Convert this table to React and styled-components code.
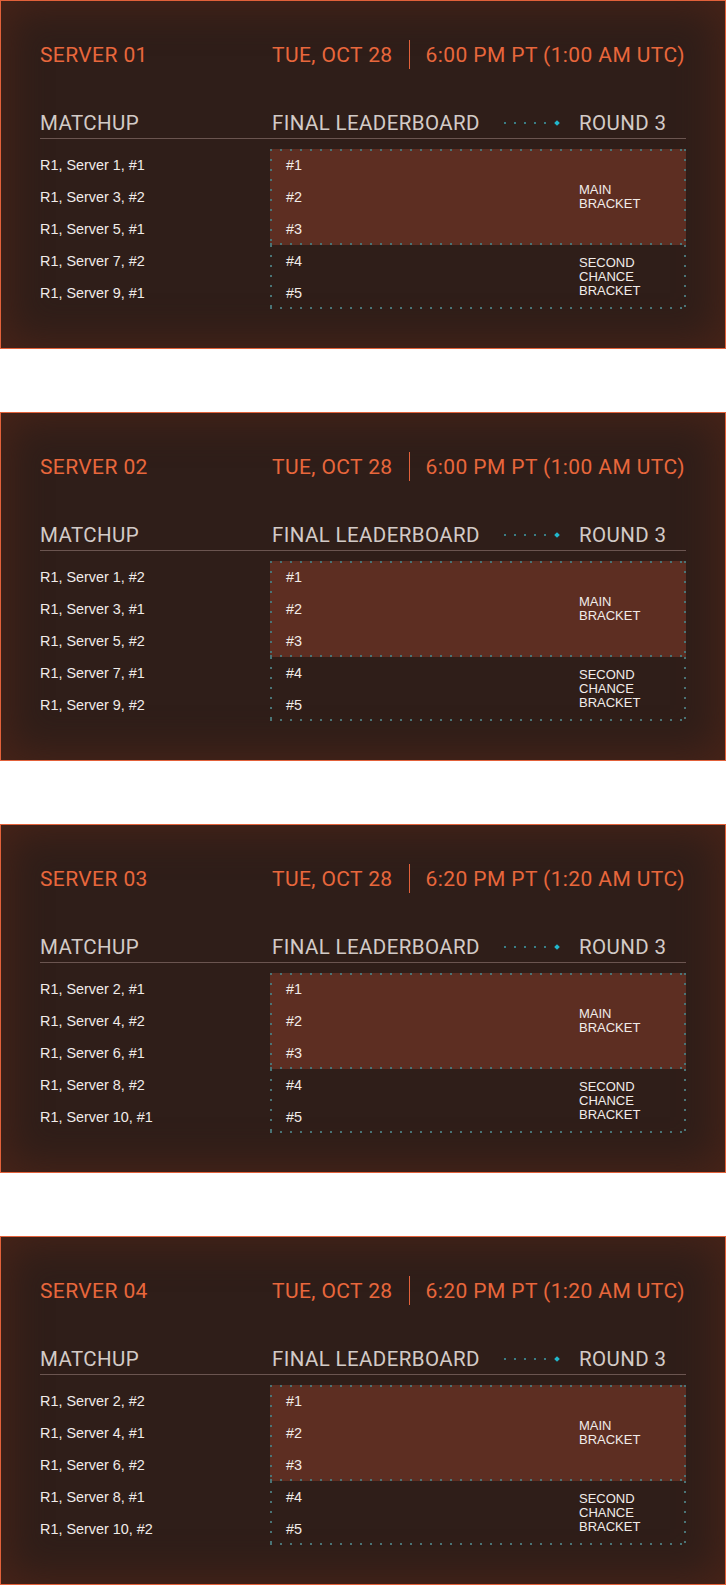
import React from 'react';
import styled, { createGlobalStyle } from 'styled-components';

const DOT = '#4a7476';

const dotted = (edges) => {
    const layers = [];
    const h = `linear-gradient(to right, ${DOT} 2px, transparent 2px)`;
    const v = `linear-gradient(to bottom, ${DOT} 2px, transparent 2px)`;
    if (edges.includes('t')) layers.push([h, 'left top / 10px 2px repeat-x']);
    if (edges.includes('b')) layers.push([h, 'left bottom / 10px 2px repeat-x']);
    if (edges.includes('l')) layers.push([v, 'left top / 2px 10px repeat-y']);
    if (edges.includes('r')) layers.push([v, 'right top / 2px 10px repeat-y']);
    return layers.map(([img, pos]) => `${img} ${pos}`).join(', ');
};

const servers = [
    {
        name: 'SERVER 01',
        time: '6:00 PM PT (1:00 AM UTC)',
        matchups: ['R1, Server 1, #1', 'R1, Server 3, #2', 'R1, Server 5, #1', 'R1, Server 7, #2', 'R1, Server 9, #1'],
    },
    {
        name: 'SERVER 02',
        time: '6:00 PM PT (1:00 AM UTC)',
        matchups: ['R1, Server 1, #2', 'R1, Server 3, #1', 'R1, Server 5, #2', 'R1, Server 7, #1', 'R1, Server 9, #2'],
    },
    {
        name: 'SERVER 03',
        time: '6:20 PM PT (1:20 AM UTC)',
        matchups: ['R1, Server 2, #1', 'R1, Server 4, #2', 'R1, Server 6, #1', 'R1, Server 8, #2', 'R1, Server 10, #1'],
    },
    {
        name: 'SERVER 04',
        time: '6:20 PM PT (1:20 AM UTC)',
        matchups: ['R1, Server 2, #2', 'R1, Server 4, #1', 'R1, Server 6, #2', 'R1, Server 8, #1', 'R1, Server 10, #2'],
    },
];

const GlobalStyle = createGlobalStyle`
    body {
        margin: 0;
        background: #ffffff;
        font-family: "Liberation Sans", Arial, sans-serif;
    }
`;

const ServerCard = ({ server }) => (
    <Card>
        <Header>
            <ServerName>{server.name}</ServerName>
            <Schedule>
                <span>TUE, OCT 28</span>
                <Divider />
                <span>{server.time}</span>
            </Schedule>
        </Header>
        <ColumnHeads>
            <HeadLabel>MATCHUP</HeadLabel>
            <HeadLabel $indent>
                FINAL LEADERBOARD
                <Connector>
                    <DotTrail />
                    <Diamond />
                </Connector>
            </HeadLabel>
            <HeadLabel>ROUND 3</HeadLabel>
        </ColumnHeads>
        <Body>
            <MatchList>
                {server.matchups.map((m) => (
                    <Row key={m}>{m}</Row>
                ))}
            </MatchList>
            <Board>
                <Bracket $main>
                    <Places>
                        <Row>#1</Row>
                        <Row>#2</Row>
                        <Row>#3</Row>
                    </Places>
                    <BracketLabel>MAIN<br />BRACKET</BracketLabel>
                </Bracket>
                <Bracket>
                    <Places>
                        <Row>#4</Row>
                        <Row>#5</Row>
                    </Places>
                    <BracketLabel>SECOND<br />CHANCE<br />BRACKET</BracketLabel>
                </Bracket>
            </Board>
        </Body>
    </Card>
);

const App = () => (
    <>
        <GlobalStyle />
        <Page>
            {servers.map((s) => (
                <ServerCard key={s.name} server={s} />
            ))}
        </Page>
    </>
);

const Page = styled.div`
    display: flex;
    flex-direction: column;
    gap: 63px;
`;

const Card = styled.section`
    border: 1px solid #e2613a;
    padding: 39px;
    background: #2f1e19;
    box-shadow: inset 0 0 40px 6px rgba(74, 36, 24, 0.95);
`;

const Header = styled.div`
    display: grid;
    grid-template-columns: 230px 1fr;
    align-items: center;
    height: 29px;
    white-space: nowrap;
    font-family: Roboto, "Liberation Sans", sans-serif;
    font-size: 21px;
    letter-spacing: 0.4px;
    color: #e8673c;
`;

const ServerName = styled.div``;

const Schedule = styled.div`
    display: flex;
    align-items: center;
    gap: 16px;
    padding-left: 2px;
    height: 100%;
`;

const Divider = styled.span`
    width: 1px;
    align-self: stretch;
    background: #e2613a;
`;

const ColumnHeads = styled.div`
    display: grid;
    grid-template-columns: 230px 1fr 107px;
    align-items: center;
    margin-top: 39px;
    height: 30px;
    border-bottom: 1px solid #6b5550;
    font-family: Roboto, "Liberation Sans", sans-serif;
    font-size: 20.5px;
    letter-spacing: 0.4px;
    color: #d3cbc7;
`;

const HeadLabel = styled.div`
    display: flex;
    align-items: center;
    white-space: nowrap;
    padding-left: ${(p) => (p.$indent ? '2px' : '0')};
`;

const Connector = styled.span`
    display: flex;
    align-items: center;
    gap: 3px;
    margin-left: 24px;
`;

const DotTrail = styled.span`
    width: 48px;
    height: 2px;
    background: linear-gradient(to right, #3a7d85 2px, transparent 2px) left top / 10px 2px repeat-x;
`;

const Diamond = styled.span`
    width: 4px;
    height: 4px;
    background: #22b8cc;
    transform: rotate(45deg);
`;

const Body = styled.div`
    display: grid;
    grid-template-columns: 230px 1fr;
    margin-top: 10px;
`;

const MatchList = styled.div`
    display: flex;
    flex-direction: column;
`;

const Row = styled.div`
    height: 32px;
    line-height: 32px;
    font-size: 14.4px;
    color: #f1ece9;
`;

const Board = styled.div`
    display: flex;
    flex-direction: column;
`;

const Bracket = styled.div`
    display: grid;
    grid-template-columns: 309px 1fr;
    align-items: center;
    background: ${(p) => (p.$main ? `${dotted('tblr')}, #5d2e22` : dotted('blr'))};
`;

const Places = styled.div`
    padding-left: 16px;
`;

const BracketLabel = styled.div`
    font-size: 13px;
    line-height: 14px;
    color: #f1ece9;
`;

export default App;
